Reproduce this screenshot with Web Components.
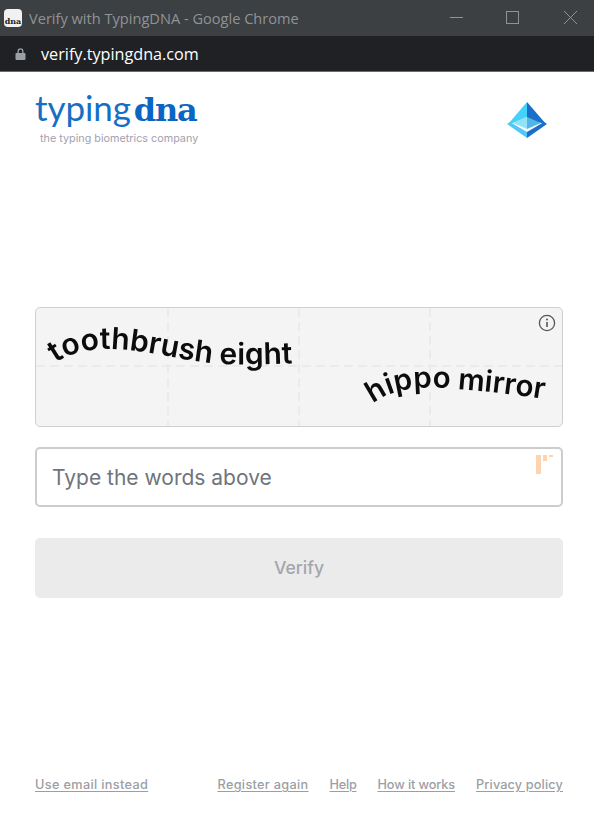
<!DOCTYPE html>
<html lang="en">
<head>
<meta charset="utf-8">
<title>Verify with TypingDNA</title>
<style>
  html, body { margin: 0; height: 100%; background: #fff; }
  body { display: flex; flex-direction: column; height: 827px; overflow: hidden; font-family: "Inter", "Liberation Sans", sans-serif; }
</style>
</head>
<body>
<x-chrome-bar title="Verify with TypingDNA - Google Chrome" url="verify.typingdna.com"></x-chrome-bar>
<x-verify-page>
  <x-brand-header slot="header"></x-brand-header>
  <x-captcha-box slot="captcha"></x-captcha-box>
  <x-words-input slot="input" placeholder="Type the words above"></x-words-input>
  <x-verify-button slot="button">Verify</x-verify-button>
  <x-footer-links slot="footer"></x-footer-links>
</x-verify-page>

<script>
class ChromeBar extends HTMLElement {
  constructor() {
    super();
    this.attachShadow({ mode: 'open' });
  }
  connectedCallback() {
    const title = this.getAttribute('title') || '';
    const url = this.getAttribute('url') || '';
    this.shadowRoot.innerHTML = `
      <style>
        :host { display: block; flex: none; font-family: "Open Sans", "Liberation Sans", sans-serif; }
        .title { height: 36px; background: #3c4043; display: flex; align-items: center; padding-left: 4px; color: #909396; font-size: 14.6px; }
        .fav { width: 18px; height: 18px; border-radius: 4px; background: #f1f1f1; display: flex; align-items: flex-end; justify-content: center; margin: -1px 7px 0 0; color: #222; font: bold 8px/12px "DejaVu Serif", serif; }
        .name { flex: 1; white-space: nowrap; }
        .win svg { display: block; }
        .url { height: 35px; background: #202124; display: flex; align-items: center; border-bottom: 1px solid #6b6c6e; color: #fff; font-size: 16.2px; }
        .lock { margin: 0 15px 0 15px; display: block; }
      </style>
      <div class="title">
        <span class="fav">dna</span>
        <span class="name">${title}</span>
        <span class="win">
          <svg width="148" height="36" viewBox="0 0 148 36" fill="none" stroke="#909396" stroke-width="1">
            <path d="M4 17.5h13"/>
            <rect x="60.5" y="11.5" width="12" height="12"/>
            <path d="M118 11l13 13M131 11l-13 13"/>
          </svg>
        </span>
      </div>
      <div class="url">
        <svg class="lock" width="11" height="14" viewBox="0 0 11 14"><path fill="#9aa0a6" d="M2.5 6V4.2a3 3 0 0 1 6 0V6h1a1 1 0 0 1 1 1v5a1 1 0 0 1-1 1h-8a1 1 0 0 1-1-1V7a1 1 0 0 1 1-1zm1.3 0h3.4V4.2a1.7 1.7 0 0 0-3.4 0z"/></svg>
        <span>${url}</span>
      </div>`;
  }
}
customElements.define('x-chrome-bar', ChromeBar);

class VerifyPage extends HTMLElement {
  constructor() {
    super();
    this.attachShadow({ mode: 'open' });
    this.shadowRoot.innerHTML = `
      <style>
        :host { display: flex; flex-direction: column; flex: 1; padding: 19px 31px 0 35px; min-height: 0; }
        .head { height: 216px; flex: none; }
        .gap-a { height: 20px; flex: none; }
        .gap-b { height: 31px; flex: none; }
        .foot { margin-top: auto; padding-bottom: 33px; }
      </style>
      <div class="head"><slot name="header"></slot></div>
      <slot name="captcha"></slot>
      <div class="gap-a"></div>
      <slot name="input"></slot>
      <div class="gap-b"></div>
      <slot name="button"></slot>
      <div class="foot"><slot name="footer"></slot></div>`;
  }
}
customElements.define('x-verify-page', VerifyPage);

class BrandHeader extends HTMLElement {
  constructor() {
    super();
    this.attachShadow({ mode: 'open' });
    this.shadowRoot.innerHTML = `
      <style>
        :host { display: flex; justify-content: space-between; align-items: flex-start; }
        .logo { display: flex; flex-direction: column; }
        .mark { font-size: 35px; line-height: 32px; height: 32px; color: #1570c4; white-space: nowrap; }
        .thin { font-family: "Lato", sans-serif; font-weight: 400; letter-spacing: -0.1px; }
        .bold { font-family: "DejaVu Serif", serif; font-weight: 700; font-size: 32px; letter-spacing: -1.2px; color: #0a66c2; margin-left: 3px; }
        .tag { margin: 9px 0 0 5px; font-size: 10.8px; line-height: 14px; color: #a39fb0; white-space: nowrap; }
        svg { display: block; margin: 11px 16px 0 0; }
      </style>
      <div class="logo">
        <div class="mark"><span class="thin">typing</span><span class="bold">dna</span></div>
        <div class="tag">the typing biometrics company</div>
      </div>
      <svg width="40" height="36" viewBox="0 0 40 36">
        <polygon points="20,0 39,22 20,18" fill="#1a6fc9"/>
        <polygon points="20,0 20,15 6,21 2,21" fill="#44d2fb"/>
        <polygon points="20,15 20,27 6,21" fill="#92e2fb"/>
        <polygon points="20,15 20,27 34,21" fill="#52b5e5"/>
        <polygon points="0,22 3,20 20,30 20,36" fill="#52c8f8"/>
        <polygon points="40,22 37,20 20,30 20,36" fill="#1a6fc9"/>
      </svg>`;
  }
}
customElements.define('x-brand-header', BrandHeader);

class CaptchaBox extends HTMLElement {
  constructor() {
    super();
    this.attachShadow({ mode: 'open' });
    this.shadowRoot.innerHTML = `
      <style>
        :host { display: block; position: relative; height: 120px; box-sizing: border-box; border: 1px solid #cfcfcf; border-radius: 5px; background: #f4f4f4; overflow: hidden; }
        svg.art { display: block; }
        text { font-family: "Inter", sans-serif; font-weight: 600; font-size: 30px; fill: #0c0c0c; filter: blur(0.4px); }
        .info { position: absolute; top: 6px; right: 6px; display: block; }
      </style>
      <svg class="art" width="526" height="118" viewBox="0 0 526 118">
        <g stroke="#ebebeb" stroke-width="2" stroke-dasharray="9 5" fill="none">
          <path d="M0 58h526"/><path d="M132 0v118"/><path d="M263 0v118"/><path d="M394 0v118"/>
        </g>
        <defs>
          <path id="arc1" d="M20 55 C36 42 64 39 92 42 C122 45 150 53 185 56 C210 57 240 56 290 54"/>
          <path id="arc2" d="M337 96 C352 83 378 78 407 80 C440 82 480 86 525 94"/>
        </defs>
        <text><textPath href="#arc1">toothbrush eight</textPath></text>
        <text style="font-size:29.5px"><textPath href="#arc2">hippo mirror</textPath></text>
      </svg>
      <svg class="info" width="18" height="18" viewBox="0 0 18 18" fill="none" stroke="#555" stroke-width="1.3">
        <circle cx="9" cy="9" r="7.6"/>
        <path d="M9 8v5" stroke-width="1.6"/>
        <circle cx="9" cy="5.4" r="1" fill="#555" stroke="none"/>
      </svg>`;
  }
}
customElements.define('x-captcha-box', CaptchaBox);

class WordsInput extends HTMLElement {
  constructor() {
    super();
    this.attachShadow({ mode: 'open' });
  }
  connectedCallback() {
    this.shadowRoot.innerHTML = `
      <style>
        :host { display: block; position: relative; height: 60px; box-sizing: border-box; border: 2px solid #cdcdcd; border-radius: 5px; background: #fff; }
        .ph { display: flex; align-items: center; height: 100%; padding-left: 15px; font-size: 21px; color: #6f747c; }
        .mark { position: absolute; top: 6px; right: 7px; display: block; }
      </style>
      <div class="ph">${this.getAttribute('placeholder') || ''}</div>
      <svg class="mark" width="18" height="20" viewBox="0 0 18 20" fill="#fdd3b0">
        <rect x="0" y="0" width="5" height="19"/>
        <rect x="7" y="0" width="4" height="6"/>
        <rect x="13" y="0" width="4" height="2"/>
      </svg>`;
  }
}
customElements.define('x-words-input', WordsInput);

class VerifyButton extends HTMLElement {
  constructor() {
    super();
    this.attachShadow({ mode: 'open' });
    this.shadowRoot.innerHTML = `
      <style>
        :host { display: flex; align-items: center; justify-content: center; box-sizing: border-box; padding-bottom: 2px; height: 60px; border-radius: 5px; background: #ebebeb; color: #a3a6aa; font-size: 17.6px; font-weight: 500; }
      </style>
      <slot></slot>`;
  }
}
customElements.define('x-verify-button', VerifyButton);

class FooterLinks extends HTMLElement {
  constructor() {
    super();
    this.attachShadow({ mode: 'open' });
    this.shadowRoot.innerHTML = `
      <style>
        :host { display: flex; align-items: center; gap: 21px; font-size: 12.7px; line-height: 18px; font-weight: 500; }
        a { color: #9b9ea5; text-decoration: underline; text-underline-offset: 2px; white-space: nowrap; }
        a:first-of-type { margin-right: auto; letter-spacing: 0.35px; }
        a:nth-of-type(2) { letter-spacing: 0.33px; }
        a:nth-of-type(3) { letter-spacing: -0.25px; }
        a:nth-of-type(4) { letter-spacing: -0.1px; }
        a:nth-of-type(5) { letter-spacing: 0.15px; }
      </style>
      <a href="#">Use email instead</a>
      <a href="#">Register again</a>
      <a href="#">Help</a>
      <a href="#">How it works</a>
      <a href="#">Privacy policy</a>`;
  }
}
customElements.define('x-footer-links', FooterLinks);
</script>
</body>
</html>
